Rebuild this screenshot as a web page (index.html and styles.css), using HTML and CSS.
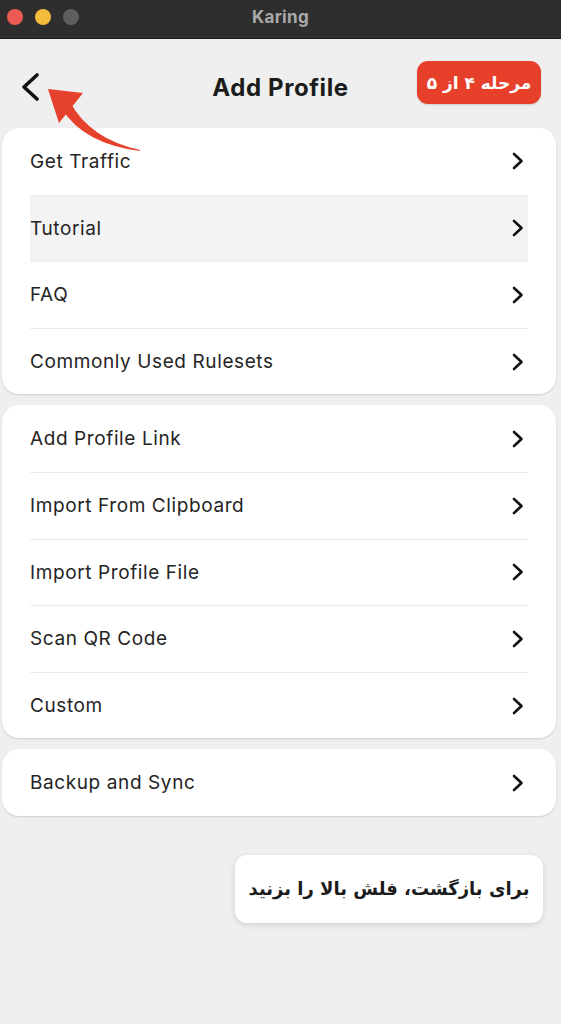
FILE: index.html
```html
<!DOCTYPE html>
<html lang="en">
<head>
<meta charset="utf-8">
<title>Karing</title>
<link rel="stylesheet" href="styles.css">
</head>
<body>
<div class="window">
  <div class="titlebar">
    <div class="lights">
      <span class="light red"></span>
      <span class="light yellow"></span>
      <span class="light gray"></span>
    </div>
    <div class="wintitle">Karing</div>
  </div>
  <div class="header">
    <div class="back">
      <svg width="20" height="30" viewBox="0 0 20 30"><path d="M17 3 L4 15 L17 27" fill="none" stroke="#111" stroke-width="3.6" stroke-linecap="round" stroke-linejoin="round"/></svg>
    </div>
    <div class="title">Add Profile</div>
    <div class="badge" dir="rtl">مرحله ۴ از ۵</div>
  </div>
  <div class="cards">
    <div class="card">
      <div class="row"><span>Get Traffic</span><svg class="chev" viewBox="0 0 12 18"><path d="M2 2 L9.5 9 L2 16"/></svg></div>
      <div class="row hover"><span>Tutorial</span><svg class="chev" viewBox="0 0 12 18"><path d="M2 2 L9.5 9 L2 16"/></svg></div>
      <div class="row"><span>FAQ</span><svg class="chev" viewBox="0 0 12 18"><path d="M2 2 L9.5 9 L2 16"/></svg></div>
      <div class="row"><span>Commonly Used Rulesets</span><svg class="chev" viewBox="0 0 12 18"><path d="M2 2 L9.5 9 L2 16"/></svg></div>
    </div>
    <div class="card">
      <div class="row"><span>Add Profile Link</span><svg class="chev" viewBox="0 0 12 18"><path d="M2 2 L9.5 9 L2 16"/></svg></div>
      <div class="row"><span>Import From Clipboard</span><svg class="chev" viewBox="0 0 12 18"><path d="M2 2 L9.5 9 L2 16"/></svg></div>
      <div class="row"><span>Import Profile File</span><svg class="chev" viewBox="0 0 12 18"><path d="M2 2 L9.5 9 L2 16"/></svg></div>
      <div class="row"><span>Scan QR Code</span><svg class="chev" viewBox="0 0 12 18"><path d="M2 2 L9.5 9 L2 16"/></svg></div>
      <div class="row"><span>Custom</span><svg class="chev" viewBox="0 0 12 18"><path d="M2 2 L9.5 9 L2 16"/></svg></div>
    </div>
    <div class="card">
      <div class="row"><span>Backup and Sync</span><svg class="chev" viewBox="0 0 12 18"><path d="M2 2 L9.5 9 L2 16"/></svg></div>
    </div>
  </div>
  <div class="tipwrap">
    <div class="tip" dir="rtl">برای بازگشت، فلش بالا را بزنید</div>
  </div>
  <svg class="arrow" width="160" height="120" viewBox="0 0 160 120">
    <path d="M140 110 Q 90 99 70 62 L 62 69 Q 84 104 140 111 Z" fill="#e5412c"/>
    <path d="M48 49 L83 53 L59 83 Z" fill="#e5412c"/>
  </svg>
</div>
</body>
</html>
```
FILE: styles.css
```css
* { box-sizing: border-box; }
html, body { margin: 0; padding: 0; }
body {
  width: 561px;
  height: 1024px;
  background: #efefef;
  font-family: "Inter", "Liberation Sans", sans-serif;
  overflow: hidden;
}
.window { position: relative; height: 1024px; }
.titlebar {
  height: 39px;
  background: #2e2e2e;
  border-bottom: 1px solid #1c1c1c;
  display: flex;
  align-items: center;
  justify-content: center;
  position: relative;
}
.lights {
  position: absolute;
  left: 7px;
  top: 9px;
  display: flex;
  gap: 12px;
}
.light { width: 16px; height: 16px; border-radius: 50%; display: block; }
.light.red { background: #ec5b53; }
.light.yellow { background: #f4bc3c; }
.light.gray { background: #5e5e5e; }
.wintitle {
  color: #a9a9a9;
  font-weight: 700;
  font-size: 17px;
  letter-spacing: 0.3px;
  margin-top: -4px;
}
.header {
  height: 89px;
  display: grid;
  grid-template-columns: 1fr auto 1fr;
  align-items: center;
  padding: 0 20px 0 20px;
}
.back { display: flex; align-items: center; padding-top: 6px; }
.title {
  font-size: 24px;
  font-weight: 700;
  letter-spacing: 0.6px;
  color: #1c1c1c;
  padding-top: 8px;
}
.badge {
  justify-self: end;
  background: #e7402a;
  color: #fff;
  font-family: "DejaVu Sans", sans-serif;
  font-weight: 700;
  font-size: 17px;
  height: 43px;
  width: 124px;
  border-radius: 11px;
  display: flex;
  align-items: center;
  justify-content: center;
  margin-top: -2px;
  box-shadow: 0 1px 2px rgba(0,0,0,0.15);
}
.cards {
  display: flex;
  flex-direction: column;
  gap: 11px;
  margin: 0 5px 0 2px;
}
.card {
  background: #fff;
  border-radius: 17px;
  box-shadow: 0 1px 2px rgba(0,0,0,0.14);
  padding: 0 28px;
}
.row {
  height: 66.6px;
  display: flex;
  align-items: center;
  justify-content: space-between;
  border-top: 1px solid #ebebeb;
  padding: 0 4px 0 0;
  font-size: 19px;
  letter-spacing: 0.6px;
  color: #242424;
}
.row:first-child { border-top: none; }
.row.hover { background: #f3f3f3; }
.chev {
  display: block;
  width: 12px;
  height: 18px;
  fill: none;
  stroke: #111;
  stroke-width: 2.6;
  stroke-linecap: round;
  stroke-linejoin: round;
}
.tipwrap {
  display: flex;
  justify-content: flex-end;
  padding: 39px 18px 0 0;
}
.tip {
  background: #fff;
  border-radius: 12px;
  box-shadow: 0 2px 6px rgba(0,0,0,0.12);
  width: 308px;
  height: 68px;
  display: flex;
  align-items: center;
  justify-content: center;
  font-family: "DejaVu Sans", sans-serif;
  font-weight: 700;
  font-size: 18px;
  color: #1b1b1b;
}
.arrow {
  position: absolute;
  left: 0;
  top: 40px;
}
```
